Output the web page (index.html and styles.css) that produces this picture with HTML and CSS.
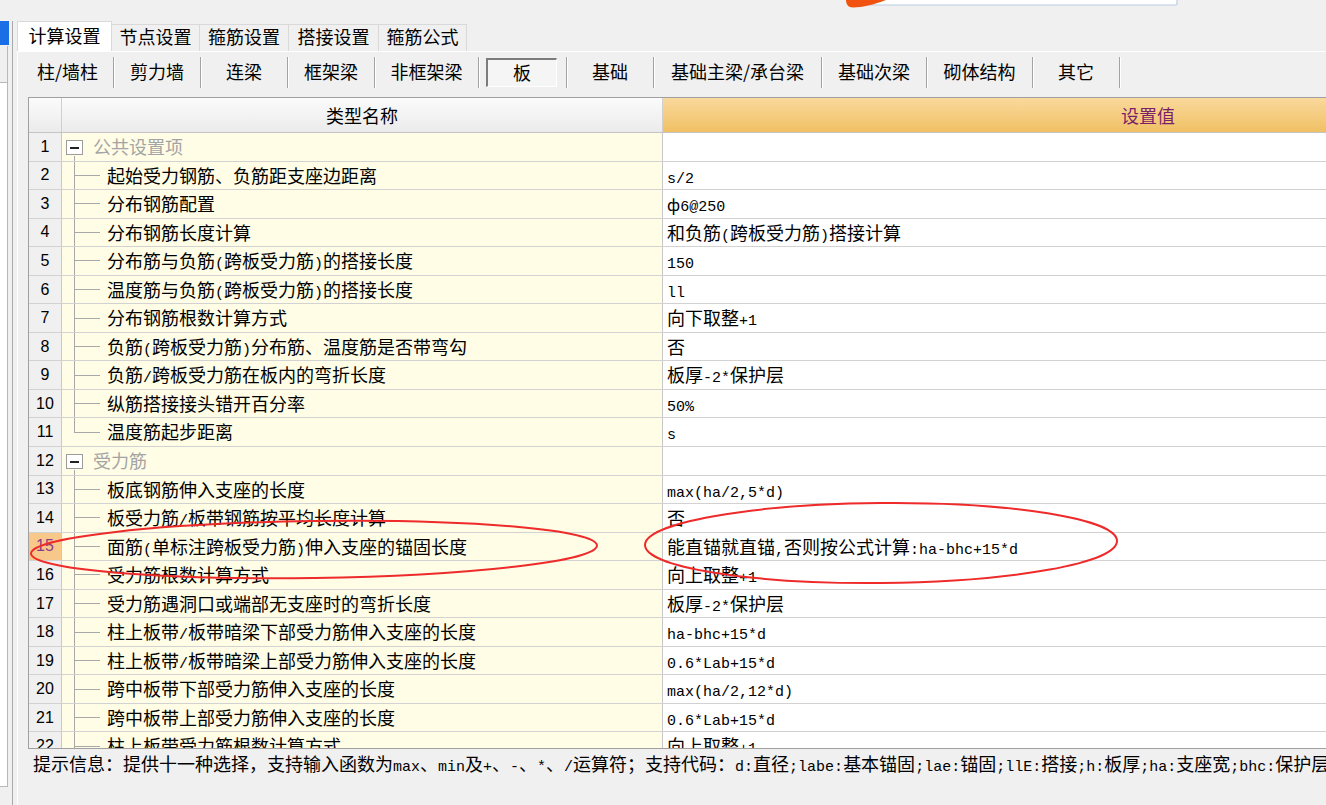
FILE: index.html
```html
<!DOCTYPE html>
<html lang="zh">
<head>
<meta charset="utf-8">
<title>计算设置</title>
<link rel="stylesheet" href="styles.css">
</head>
<body>
<div class="topstrip">
  <svg class="topfrag" width="340" height="9" viewBox="0 0 340 9">
    <rect x="16" y="-3" width="315" height="8" rx="1.5" fill="#fff" stroke="#bccde2" stroke-width="1.2"/>
    <path d="M0 0 H40 C30 4 16 7.5 7 7.5 C2 7.5 0 4 0 0 Z" fill="#f2520f"/>
  </svg>
</div>
<div class="shell">
  <div class="sidebar">
    <div class="sb-blue"></div>
    <div class="sb-box"></div>
    <div class="sb-panel"></div>
  </div>
  <div class="main">
    <div class="tabs">
      <div class="tab active w94">计算设置</div>
      <div class="tab w89">节点设置</div>
      <div class="tab w90">箍筋设置</div>
      <div class="tab w91">搭接设置</div>
      <div class="tab w89">箍筋公式</div>
    </div>
    <div class="pane">
      <div class="subtabs">
        <div class="sub s92">柱/墙柱</div>
        <div class="sub s87">剪力墙</div>
        <div class="sub s87">连梁</div>
        <div class="sub s87">框架梁</div>
        <div class="sub s104">非框架梁</div>
        <div class="sub s88"><span class="pressed">板</span></div>
        <div class="sub s87">基础</div>
        <div class="sub s168">基础主梁/承台梁</div>
        <div class="sub s105">基础次梁</div>
        <div class="sub s106">砌体结构</div>
        <div class="sub s87">其它</div>
      </div>
      <div class="grid">
        <div class="thead">
          <div class="h-num"></div>
          <div class="h-name">类型名称</div>
          <div class="h-val">设置值</div>
        </div>
        <div class="row"><div class="num">1</div><div class="name grp"><span class="minus"></span>公共设置项</div><div class="val"></div></div>
        <div class="row"><div class="num">2</div><div class="name it">起始受力钢筋、负筋距支座边距离</div><div class="val"><span class="m">s/2</span></div></div>
        <div class="row"><div class="num">3</div><div class="name it">分布钢筋配置</div><div class="val"><span class="phi">ф</span><span class="m">6@250</span></div></div>
        <div class="row"><div class="num">4</div><div class="name it">分布钢筋长度计算</div><div class="val">和负筋<span class="m">(</span>跨板受力筋<span class="m">)</span>搭接计算</div></div>
        <div class="row"><div class="num">5</div><div class="name it">分布筋与负筋<span class="m">(</span>跨板受力筋<span class="m">)</span>的搭接长度</div><div class="val"><span class="m">150</span></div></div>
        <div class="row"><div class="num">6</div><div class="name it">温度筋与负筋<span class="m">(</span>跨板受力筋<span class="m">)</span>的搭接长度</div><div class="val"><span class="m">ll</span></div></div>
        <div class="row"><div class="num">7</div><div class="name it">分布钢筋根数计算方式</div><div class="val">向下取整<span class="m">+1</span></div></div>
        <div class="row"><div class="num">8</div><div class="name it">负筋<span class="m">(</span>跨板受力筋<span class="m">)</span>分布筋、温度筋是否带弯勾</div><div class="val">否</div></div>
        <div class="row"><div class="num">9</div><div class="name it">负筋<span class="m">/</span>跨板受力筋在板内的弯折长度</div><div class="val">板厚<span class="m">-2*</span>保护层</div></div>
        <div class="row"><div class="num">10</div><div class="name it">纵筋搭接接头错开百分率</div><div class="val"><span class="m">50%</span></div></div>
        <div class="row"><div class="num">11</div><div class="name it last">温度筋起步距离</div><div class="val"><span class="m">s</span></div></div>
        <div class="row"><div class="num">12</div><div class="name grp"><span class="minus"></span>受力筋</div><div class="val"></div></div>
        <div class="row"><div class="num">13</div><div class="name it">板底钢筋伸入支座的长度</div><div class="val"><span class="m">max(ha/2,5*d)</span></div></div>
        <div class="row"><div class="num">14</div><div class="name it">板受力筋<span class="m">/</span>板带钢筋按平均长度计算</div><div class="val">否</div></div>
        <div class="row"><div class="num sel">15</div><div class="name it">面筋<span class="m">(</span>单标注跨板受力筋<span class="m">)</span>伸入支座的锚固长度</div><div class="val">能直锚就直锚<span class="m">,</span>否则按公式计算<span class="m">:ha-bhc+15*d</span></div></div>
        <div class="row"><div class="num">16</div><div class="name it">受力筋根数计算方式</div><div class="val">向上取整<span class="m">+1</span></div></div>
        <div class="row"><div class="num">17</div><div class="name it">受力筋遇洞口或端部无支座时的弯折长度</div><div class="val">板厚<span class="m">-2*</span>保护层</div></div>
        <div class="row"><div class="num">18</div><div class="name it">柱上板带<span class="m">/</span>板带暗梁下部受力筋伸入支座的长度</div><div class="val"><span class="m">ha-bhc+15*d</span></div></div>
        <div class="row"><div class="num">19</div><div class="name it">柱上板带<span class="m">/</span>板带暗梁上部受力筋伸入支座的长度</div><div class="val"><span class="m">0.6*Lab+15*d</span></div></div>
        <div class="row"><div class="num">20</div><div class="name it">跨中板带下部受力筋伸入支座的长度</div><div class="val"><span class="m">max(ha/2,12*d)</span></div></div>
        <div class="row"><div class="num">21</div><div class="name it">跨中板带上部受力筋伸入支座的长度</div><div class="val"><span class="m">0.6*Lab+15*d</span></div></div>
        <div class="row"><div class="num">22</div><div class="name it">柱上板带受力筋根数计算方式</div><div class="val">向上取整<span class="m">+1</span></div></div>
      </div>
      <div class="hint">提示信息：提供十一种选择，支持输入函数为<span class="m">max</span>、<span class="m">min</span>及<span class="m">+</span>、<span class="m">-</span>、<span class="m">*</span>、<span class="m">/</span>运算符；支持代码：<span class="m">d:</span>直径<span class="m">;labe:</span>基本锚固<span class="m">;lae:</span>锚固<span class="m">;llE:</span>搭接<span class="m">;h:</span>板厚<span class="m">;ha:</span>支座宽<span class="m">;bhc:</span>保护层</div>
    </div>
  </div>
</div>
<svg class="marks" width="1326" height="805" viewBox="0 0 1326 805">
  <ellipse cx="314" cy="549.5" rx="283" ry="28.5" transform="rotate(-0.8 314 549.5)" fill="none" stroke="#ee2a2a" stroke-width="2"/>
  <ellipse cx="881" cy="543" rx="236" ry="40" transform="rotate(-0.5 881 543)" fill="none" stroke="#ee2a2a" stroke-width="2"/>
</svg>
</body>
</html>
```
FILE: styles.css
```css
html, body {
  margin: 0;
  padding: 0;
}
body {
  width: 1326px;
  height: 805px;
  overflow: hidden;
  background: #f0f0f0;
  font-family: "Noto Sans CJK SC", sans-serif;
  font-size: 18px;
  color: #000;
  position: relative;
}
.topstrip {
  height: 21px;
  padding-left: 846px;
  box-sizing: border-box;
}
.topfrag {
  display: block;
}
.shell {
  display: flex;
  height: 784px;
}
.sidebar {
  width: 12px;
  border-right: 1px solid #a9a9a9;
  display: flex;
  flex-direction: column;
}
.sb-blue {
  width: 9px;
  height: 24px;
  background: #1b6fe6;
}
.sb-box {
  width: 7px;
  height: 36px;
  margin-top: 1px;
  border-right: 1px solid #b8b8b8;
  border-bottom: 1px solid #b8b8b8;
}
.sb-panel {
  width: 7px;
  height: 703px;
  background: #fff;
  border-right: 1px solid #b8b8b8;
  border-bottom: 1px solid #b8b8b8;
}
.main {
  flex: 1;
  display: flex;
  flex-direction: column;
  min-width: 0;
}
.tabs {
  height: 30px;
  display: flex;
  align-items: flex-end;
  padding-left: 4px;
}
.tab {
  box-sizing: border-box;
  height: 27px;
  border: 1px solid #d9d9d9;
  border-bottom: none;
  margin-right: -1px;
  background: #f0f0f0;
  display: flex;
  align-items: center;
  justify-content: center;
  line-height: 1;
  padding-bottom: 4px;
}
.tab.active {
  height: 30px;
  background: #fff;
  position: relative;
  z-index: 1;
  padding-bottom: 3px;
}
.w94 { width: 95px; }
.w89 { width: 89px; }
.w90 { width: 90px; }
.w91 { width: 91px; }
.pane {
  flex: 1;
  margin-left: 4px;
  border-top: 1px solid #fff;
  border-left: 1px solid #fff;
  padding: 3px 0 0 4px;
  display: flex;
  flex-direction: column;
  min-width: 0;
}
.subtabs {
  height: 35px;
  display: flex;
  flex-shrink: 0;
}
.sub {
  box-sizing: border-box;
  height: 31px;
  margin-top: 2px;
  border-right: 1px solid #a3a3a3;
  box-shadow: 1px 0 0 #fff;
  display: flex;
  align-items: center;
  justify-content: center;
  line-height: 1;
  padding-bottom: 3px;
  flex-shrink: 0;
}
.s92 { width: 92px; }
.s87 { width: 87px; }
.s88 { width: 88px; justify-content: flex-start; padding-bottom: 0; }
.s104 { width: 104px; }
.s105 { width: 105px; }
.s106 { width: 106px; }
.s168 { width: 168px; }
.pressed {
  box-sizing: border-box;
  width: 71px;
  height: 29px;
  margin-left: 7px;
  border-top: 2px solid #7c7c7c;
  border-left: 2px solid #7c7c7c;
  border-right: 1px solid #fff;
  border-bottom: 1px solid #fff;
  background: #f5f5f5;
  display: flex;
  align-items: center;
  justify-content: center;
  padding-bottom: 2px;
}
.grid {
  margin: 7px 0 0 6px;
  height: 652px;
  box-sizing: border-box;
  border-top: 1px solid #a0a0a0;
  border-left: 1px solid #a0a0a0;
  border-bottom: 1px solid #a0a0a0;
  overflow: hidden;
  flex-shrink: 0;
  width: 1700px;
}
.thead {
  display: flex;
  height: 35px;
  box-sizing: border-box;
  border-bottom: 1px solid #c4c4c4;
}
.h-num, .h-name {
  background: linear-gradient(#fbfbfb, #ebebeb);
  border-right: 1px solid #d0d0d0;
  box-sizing: border-box;
}
.h-num { width: 33px; }
.h-name {
  width: 601px;
  display: flex;
  align-items: center;
  justify-content: center;
}
.h-val {
  width: 970px;
  background: linear-gradient(#fad99d, #f0c064);
  color: #7b1f6b;
  display: flex;
  align-items: center;
  justify-content: center;
}
.row {
  display: flex;
  height: 28.55px;
  box-sizing: border-box;
  border-bottom: 1px solid #d2d2d2;
}
.num {
  width: 33px;
  box-sizing: border-box;
  border-right: 1px solid #c8c8c8;
  background: #f0f0f0;
  font-family: "Liberation Sans", sans-serif;
  font-size: 16px;
  display: flex;
  align-items: center;
  justify-content: center;
}
.num.sel {
  background: #f8c88a;
  color: #8b3a8b;
}
.name {
  width: 601px;
  box-sizing: border-box;
  border-right: 1px solid #c8c8c8;
  background-color: #fffde6;
  line-height: 27px;
  white-space: nowrap;
  overflow: hidden;
}
.it {
  padding-left: 45px;
  background-image: linear-gradient(#a8a8a8, #a8a8a8), linear-gradient(#a8a8a8, #a8a8a8);
  background-position: 12px 0, 12px 50%;
  background-size: 1px 100%, 26px 1px;
  background-repeat: no-repeat;
}
.it.last {
  background-size: 1px 50%, 26px 1px;
}
.grp {
  padding-left: 4px;
  color: #a4a4a4;
  background-image: linear-gradient(#a8a8a8, #a8a8a8);
  background-position: 12px 100%;
  background-size: 1px 5px;
  background-repeat: no-repeat;
}
.minus {
  display: inline-block;
  vertical-align: middle;
  box-sizing: border-box;
  width: 17px;
  height: 15px;
  border: 1px solid #9c9c9c;
  background: linear-gradient(#222, #222) center / 9px 2px no-repeat, #fff;
  margin: -3px 10px 0 0;
}
.val {
  width: 970px;
  background: #fff;
  padding-left: 4px;
  line-height: 27px;
  white-space: nowrap;
}
.m {
  font-family: "Liberation Mono", monospace;
  font-size: 15px;
}
.phi {
  font-size: 16px;
}
.hint {
  height: 56px;
  padding: 2px 0 0 11px;
  line-height: 24px;
  white-space: nowrap;
  overflow: hidden;
}
.marks {
  position: absolute;
  left: 0;
  top: 0;
  pointer-events: none;
}
```
